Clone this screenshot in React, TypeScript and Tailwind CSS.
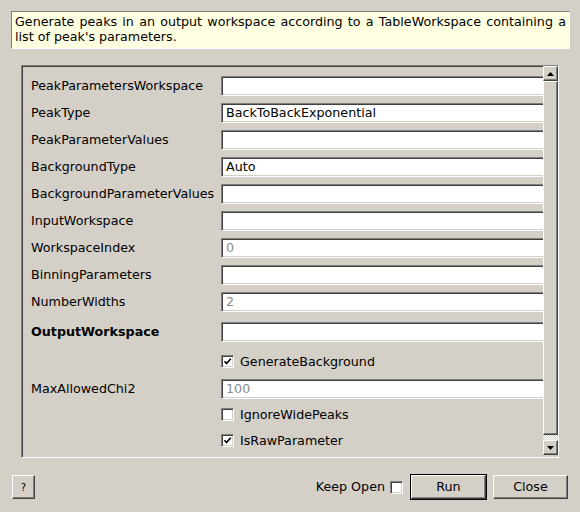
import React from 'react';

type Row =
  | { kind: 'field'; label: string; value?: string; hint?: string; bold?: boolean; mt: string }
  | { kind: 'check'; label: string; checked: boolean; mt: string };

const rows: Row[] = [
  { kind: 'field', label: 'PeakParametersWorkspace', mt: 'mt-0' },
  { kind: 'field', label: 'PeakType', value: 'BackToBackExponential', mt: 'mt-[7px]' },
  { kind: 'field', label: 'PeakParameterValues', mt: 'mt-[7px]' },
  { kind: 'field', label: 'BackgroundType', value: 'Auto', mt: 'mt-[7px]' },
  { kind: 'field', label: 'BackgroundParameterValues', mt: 'mt-[7px]' },
  { kind: 'field', label: 'InputWorkspace', mt: 'mt-[7px]' },
  { kind: 'field', label: 'WorkspaceIndex', hint: '0', mt: 'mt-[7px]' },
  { kind: 'field', label: 'BinningParameters', mt: 'mt-[7px]' },
  { kind: 'field', label: 'NumberWidths', hint: '2', mt: 'mt-[7px]' },
  { kind: 'field', label: 'OutputWorkspace', bold: true, mt: 'mt-[10px]' },
  { kind: 'check', label: 'GenerateBackground', checked: true, mt: 'mt-[10px]' },
  { kind: 'field', label: 'MaxAllowedChi2', hint: '100', mt: 'mt-[7px]' },
  { kind: 'check', label: 'IgnoreWidePeaks', checked: false, mt: 'mt-[6px]' },
  { kind: 'check', label: 'IsRawParameter', checked: true, mt: 'mt-[6px]' },
];

const sunken =
  'border border-[#808080] border-r-white border-b-white shadow-[inset_1px_1px_0_#404040,inset_-1px_-1px_0_#d4d0c8]';
const raised =
  'border border-white border-r-[#404040] border-b-[#404040] shadow-[inset_-1px_-1px_0_#808080] bg-[#d4d0c8]';

function CheckBox({ checked }: { checked: boolean }) {
  return (
    <div className={`w-[13px] h-[13px] bg-white shrink-0 flex items-center justify-center ${sunken}`}>
      {checked && (
        <svg width="9" height="9" viewBox="0 0 9 9">
          <path d="M1.5 4.2 L3.5 6.5 L7.8 1.8" fill="none" stroke="#000" strokeWidth="1.7" />
        </svg>
      )}
    </div>
  );
}

function Arrow({ up }: { up: boolean }) {
  return (
    <div className={`h-[15px] w-full flex items-center justify-center shrink-0 ${raised}`}>
      <svg width="7" height="4" viewBox="0 0 7 4">
        <path d={up ? 'M0 4 L3.5 0 L7 4 Z' : 'M0 0 L7 0 L3.5 4 Z'} fill="#000" />
      </svg>
    </div>
  );
}

export default function App() {
  return (
    <div className="w-[580px] h-[512px] bg-[#d4d0c8] text-black text-[12.7px] font-['DejaVu_Sans',sans-serif] overflow-hidden">
      <div className="pl-[11px] pt-[11px] pr-[10px]">
        <div className="bg-[#ffffe1] border border-[#808080] border-r-white border-b-white px-[3px] pt-[2px] pb-[4px] leading-[15px] text-justify">
          Generate peaks in an output workspace according to a TableWorkspace containing a list of peak's parameters.
        </div>
      </div>

      <div className={`ml-[21px] mt-[16px] w-[538px] h-[393px] flex ${sunken}`}>
        <div className="flex-1 overflow-hidden pt-[10px] pl-[9px]">
          {rows.map((row) => (
            <div key={row.label} className={`flex items-center h-[20px] ${row.mt}`}>
              <div className={`w-[190px] shrink-0 whitespace-nowrap ${row.kind === 'field' && row.bold ? 'font-bold' : ''}`}>
                {row.kind === 'field' ? row.label : ''}
              </div>
              {row.kind === 'field' ? (
                <div className={`flex-1 -mr-[3px] h-[20px] bg-white flex items-center pl-[4px] ${sunken}`}>
                  {row.value && <span>{row.value}</span>}
                  {row.hint && <span className="text-[#8a8a8a]">{row.hint}</span>}
                </div>
              ) : (
                <div className="flex items-center gap-[6px]">
                  <CheckBox checked={row.checked} />
                  <span>{row.label}</span>
                </div>
              )}
            </div>
          ))}
        </div>
        <div className="w-[15px] shrink-0 flex flex-col">
          <Arrow up />
          <div className={`h-[354px] shrink-0 ${raised}`} />
          <div className="h-[5px] shrink-0 bg-[repeating-conic-gradient(#ffffff_0_25%,#d4d0c8_0_50%)] bg-[length:2px_2px]" />
          <Arrow up={false} />
        </div>
      </div>

      <div className="flex items-center mt-[16px] h-[26px] pl-[12px] pr-[12px]">
        <div className={`w-[23px] h-[24px] flex items-center justify-center text-[10px] ${raised}`}>?</div>
        <div className="flex-1" />
        <span>Keep Open</span>
        <div className="ml-[5px]">
          <CheckBox checked={false} />
        </div>
        <div className="ml-[7px] border border-black">
          <div className={`w-[75px] h-[24px] flex items-center justify-center ${raised}`}>Run</div>
        </div>
        <div className={`ml-[6px] w-[75px] h-[24px] flex items-center justify-center ${raised}`}>Close</div>
      </div>
    </div>
  );
}
